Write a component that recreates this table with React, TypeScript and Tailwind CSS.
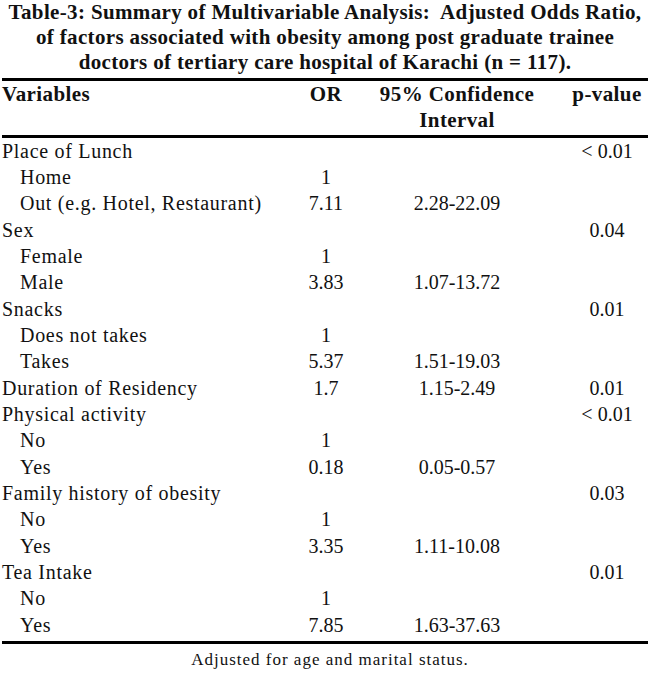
type Row = {
  label: string;
  sub?: boolean;
  or?: string;
  ci?: string;
  p?: string;
};

const ROWS: Row[] = [
  { label: "Place of Lunch", p: "< 0.01" },
  { label: "Home", sub: true, or: "1" },
  { label: "Out (e.g. Hotel, Restaurant)", sub: true, or: "7.11", ci: "2.28-22.09" },
  { label: "Sex", p: "0.04" },
  { label: "Female", sub: true, or: "1" },
  { label: "Male", sub: true, or: "3.83", ci: "1.07-13.72" },
  { label: "Snacks", p: "0.01" },
  { label: "Does not takes", sub: true, or: "1" },
  { label: "Takes", sub: true, or: "5.37", ci: "1.51-19.03" },
  { label: "Duration of Residency", or: "1.7", ci: "1.15-2.49", p: "0.01" },
  { label: "Physical activity", p: "< 0.01" },
  { label: "No", sub: true, or: "1" },
  { label: "Yes", sub: true, or: "0.18", ci: "0.05-0.57" },
  { label: "Family history of obesity", p: "0.03" },
  { label: "No", sub: true, or: "1" },
  { label: "Yes", sub: true, or: "3.35", ci: "1.11-10.08" },
  { label: "Tea Intake", p: "0.01" },
  { label: "No", sub: true, or: "1" },
  { label: "Yes", sub: true, or: "7.85", ci: "1.63-37.63" },
];

export default function App() {
  return (
    <div className="w-[650px] h-[676px] bg-white text-[#111] font-['Liberation_Serif','Times_New_Roman',serif] overflow-hidden">
      <h1 className="text-center font-bold text-[21px] leading-[25px] tracking-[0.35px] whitespace-nowrap">
        Table-3: Summary of Multivariable Analysis:&nbsp; Adjusted Odds Ratio,
        <br />
        of factors associated with obesity among post graduate trainee
        <br />
        doctors of tertiary care hospital of Karachi (n = 117).
      </h1>

      <div className="mx-[2px] mt-[3px]">
        <div className="h-[3px] bg-black" />

        <div className="grid grid-cols-[278px_92px_170px_108px] text-[21px] leading-[26.33px] font-bold tracking-[0.4px]">
          <div>Variables</div>
          <div className="text-center">OR</div>
          <div className="text-center whitespace-nowrap">
            95% Confidence
            <br />
            Interval
          </div>
          <div className="text-center pl-[22px]">p-value</div>
        </div>

        <div className="mt-[1px] h-[3px] bg-black" />

        <div className="text-[20px]">
          {ROWS.map((r, i) => (
            <div
              key={i}
              className="grid grid-cols-[278px_92px_170px_108px] h-[26.33px] leading-[26.33px]"
            >
              <div className={`tracking-[0.7px] ${r.sub ? "pl-[18px]" : ""}`}>{r.label}</div>
              <div className="text-center">{r.or}</div>
              <div className="text-center">{r.ci}</div>
              <div className="text-center pl-[22px]">{r.p}</div>
            </div>
          ))}
        </div>

        <div className="mt-[3px] h-[3px] bg-black" />
      </div>

      <p className="text-center text-[17px] leading-[20px] mt-[6px] tracking-[1px] pl-[10px]">
        Adjusted for age and marital status.
      </p>
    </div>
  );
}
